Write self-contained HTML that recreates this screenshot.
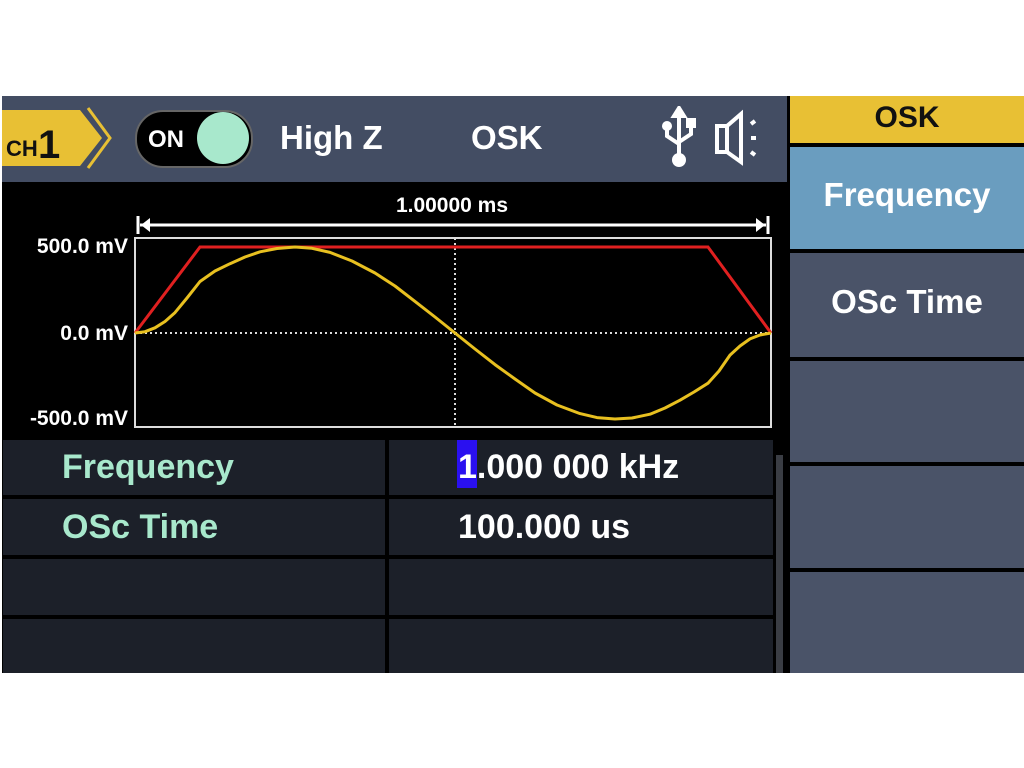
<!DOCTYPE html>
<html><head><style>
body{margin:0;width:1024px;height:768px;background:#fff;position:relative;overflow:hidden;font-family:"Liberation Sans",sans-serif;font-weight:bold}
.a{position:absolute}
.t{color:#fff;font-size:30px;line-height:1}
.cell{position:absolute;background:#1c2029}
.btn{position:absolute;left:790px;width:234px;background:#4a5368}
</style></head><body>
<div class="a" style="left:2px;top:96px;width:1022px;height:577px;background:#000"></div>
<div class="a" style="left:2px;top:96px;width:785px;height:86px;background:#434d63"></div>
<svg class="a" style="left:2px;top:104px" width="110" height="70">
<polygon points="0,6 78,6 100,34 78,62 0,62" fill="#e8c034"/>
<polyline points="86,4 108,34 86,64" fill="none" stroke="#e8c034" stroke-width="3"/>
<text x="4" y="52" font-family="Liberation Sans" font-weight="bold" font-size="22" fill="#111">CH</text>
<text x="36" y="54" font-family="Liberation Sans" font-weight="bold" font-size="40" fill="#111">1</text>
</svg>
<div class="a" style="left:135px;top:110px;width:114px;height:54px;border-radius:28px;background:#000;border:2px solid #666"></div>
<div class="a" style="left:148px;top:126px;color:#fff;font-size:24px">ON</div>
<div class="a" style="left:197px;top:112px;width:52px;height:52px;border-radius:50%;background:#a8e8cc"></div>
<div class="a t" style="left:280px;top:121px;font-size:33px">High Z</div>
<div class="a t" style="left:471px;top:121px;font-size:33px">OSK</div>
<svg class="a" style="left:655px;top:106px" width="110" height="66" stroke="#fff" fill="none" stroke-width="4">
<line x1="24" y1="6" x2="24" y2="50"/><polygon points="24,2 19,10 29,10" fill="#fff"/>
<path d="M12 22v8l12 8M36 18v10l-12 8"/><circle cx="12" cy="20" r="3" fill="#fff"/><rect x="33" y="14" width="6" height="6" fill="#fff"/>
<circle cx="24" cy="54" r="7" fill="#fff" stroke="none"/>
<path d="M62 20h10v26h-10zM72 20l14-12v48l-14-10"/>
<line x1="96" y1="18" x2="100" y2="15"/><line x1="96" y1="32" x2="101" y2="32"/><line x1="96" y1="46" x2="100" y2="49"/>
</svg>
<svg class="a" style="left:0;top:182px" width="787" height="255">
<text x="452" y="30" fill="#fff" font-family="Liberation Sans" font-weight="bold" font-size="21" text-anchor="middle">1.00000 ms</text>
<line x1="140" y1="43" x2="766" y2="43" stroke="#fff" stroke-width="3"/>
<line x1="138" y1="34" x2="138" y2="52" stroke="#fff" stroke-width="3"/><polygon points="141,43 150,36 150,50" fill="#fff"/>
<line x1="768" y1="34" x2="768" y2="52" stroke="#fff" stroke-width="3"/><polygon points="765,43 756,36 756,50" fill="#fff"/>
<rect x="135" y="56" width="636" height="189" fill="none" stroke="#ddd" stroke-width="2"/>
<line x1="135" y1="151" x2="771" y2="151" stroke="#ddd" stroke-width="2" stroke-dasharray="2,3"/>
<line x1="455" y1="56" x2="455" y2="245" stroke="#ddd" stroke-width="2" stroke-dasharray="2,3"/>
<g font-family="Liberation Sans" font-weight="bold" font-size="21" fill="#fff" text-anchor="end">
<text x="128" y="71">500.0 mV</text><text x="128" y="158">0.0 mV</text><text x="128" y="243">-500.0 mV</text></g>
<polyline points="135,151 200,65 708,65 771,151" fill="none" stroke="#e02020" stroke-width="3"/>
<polyline transform="translate(0,-182)" fill="none" stroke="#e8c020" stroke-width="3" stroke-linejoin="round" points="135,333 145,331.7 155,327.8 165,321.5 175,312.6 187,298 200,281.5 215,271 230,263.7 245,257 260,251.8 277,248.5 295,247 312,248.3 330,252.4 352,261 375,273 395,286 415,301.4 435,317 455,333 475,349 495,364.6 515,379 535,393 557,405 580,413.6 597,417.6 615,419 632,418 650,414.2 665,408 680,400.2 694,392 708,383.2 719,371 730,355.1 740,346 750,338.9 760,335 771,333"/>
</svg>
<div class="cell" style="left:3px;top:440px;width:382px;height:55px"></div>
<div class="cell" style="left:389px;top:440px;width:384px;height:55px"></div>
<div class="cell" style="left:3px;top:499px;width:382px;height:56px"></div>
<div class="cell" style="left:389px;top:499px;width:384px;height:56px"></div>
<div class="cell" style="left:3px;top:559px;width:382px;height:56px"></div>
<div class="cell" style="left:389px;top:559px;width:384px;height:56px"></div>
<div class="cell" style="left:3px;top:619px;width:382px;height:54px"></div>
<div class="cell" style="left:389px;top:619px;width:384px;height:54px"></div>
<div class="a" style="left:776px;top:455px;width:7px;height:218px;background:#3a3d44"></div>
<div class="a t" style="left:62px;top:450px;color:#a8e8cc;font-size:34px">Frequency</div>
<div class="a t" style="left:62px;top:510px;color:#a8e8cc;font-size:34px">OSc Time</div>
<div class="a" style="left:457px;top:440px;width:20px;height:48px;background:#2a10f0"></div>
<div class="a t" style="left:458px;top:450px;font-size:34px">1.000 000 kHz</div>
<div class="a t" style="left:458px;top:510px;font-size:34px">100.000 us</div>
<div class="a" style="left:790px;top:96px;width:234px;height:47px;background:#e8c034"></div>
<div class="a" style="left:790px;top:101px;width:234px;text-align:center;font-size:30px;color:#111">OSK</div>
<div class="a" style="left:790px;top:147px;width:234px;height:102px;background:#6a9dbf"></div>
<div class="a t" style="left:790px;top:178px;width:234px;text-align:center;font-size:33px">Frequency</div>
<div class="btn" style="top:253px;height:104px"></div>
<div class="a t" style="left:790px;top:285px;width:234px;text-align:center;font-size:33px">OSc Time</div>
<div class="btn" style="top:361px;height:101px"></div>
<div class="btn" style="top:466px;height:102px"></div>
<div class="btn" style="top:572px;height:101px"></div>
</body></html>
